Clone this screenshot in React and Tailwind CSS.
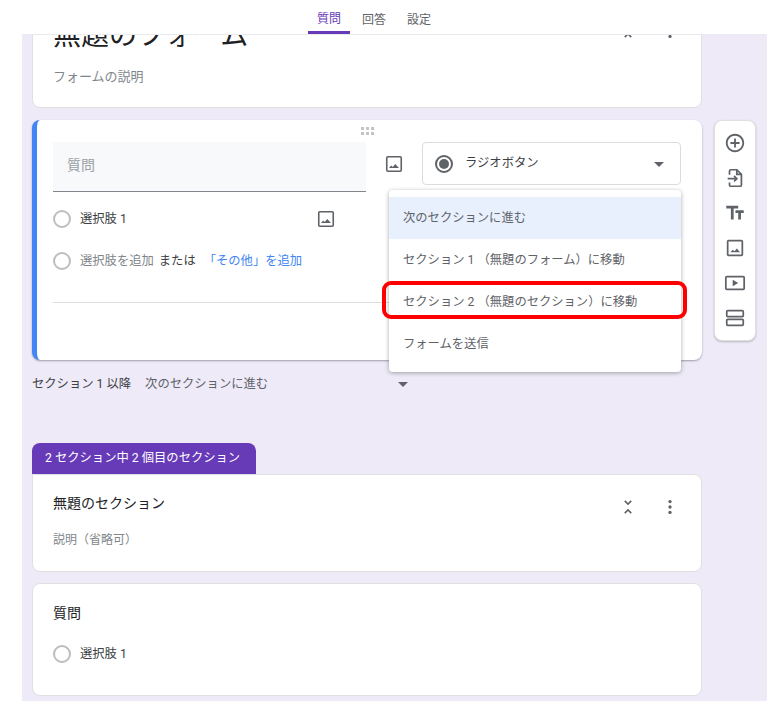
import React from "react";

const font = { fontFamily: 'Roboto, "Noto Sans CJK JP", sans-serif' };

function ImageIcon({ className }) {
  return (
    <svg viewBox="0 0 18 18" className={className} fill="none">
      <rect x="1.75" y="1.75" width="14.5" height="14.5" rx="1" stroke="#5f6368" strokeWidth="1.6" />
      <path d="M4 13l2.200-2.600 1.600 1.600 2.400-3 3.800 4z" fill="#5f6368" />
    </svg>
  );
}

function Caret({ className }) {
  return (
    <svg viewBox="0 0 10 5" className={className}>
      <path d="M0 0h10L5 5z" fill="#5f6368" />
    </svg>
  );
}

function Radio() {
  return <div className="w-[18px] h-[18px] rounded-full border-2 border-[#bdbdbd] shrink-0" />;
}

function UnfoldIcon() {
  return (
    <svg viewBox="0 0 24 24" className="w-5 h-5" fill="#5f6368">
      <path d="M7.410 18.590L8.830 20 12 16.830 15.170 20l1.410-1.410L12 14l-4.590 4.590zm9.180-13.180L15.170 4 12 7.170 8.830 4 7.410 5.410 12 10l4.590-4.590z" />
    </svg>
  );
}

function MoreIcon() {
  return (
    <svg viewBox="0 0 24 24" className="w-5 h-5" fill="#5f6368">
      <circle cx="12" cy="5.500" r="2" />
      <circle cx="12" cy="12" r="2" />
      <circle cx="12" cy="18.500" r="2" />
    </svg>
  );
}

function Toolbar() {
  return (
    <div className="w-[42px] h-[221px] ml-[12px] bg-white rounded-lg border border-[#e0e0e0] shadow-[0_1px_2px_rgba(60,64,67,0.3)] flex flex-col items-center pt-[11px] gap-[13px] shrink-0">
      <svg viewBox="0 0 24 24" className="w-[22px] h-[22px]" fill="#5f6368">
        <path d="M13 7h-2v4H7v2h4v4h2v-4h4v-2h-4V7zm-1-5C6.480 2 2 6.480 2 12s4.480 10 10 10 10-4.480 10-10S17.520 2 12 2zm0 18c-4.410 0-8-3.590-8-8s3.590-8 8-8 8 3.590 8 8-3.590 8-8 8z" />
      </svg>
      <svg viewBox="0 0 24 24" className="w-[22px] h-[22px]" fill="none" stroke="#5f6368" strokeWidth="1.900">
        <path d="M6 8.500V4.500A1.500 1.500 0 0 1 7.500 3H14l5 5v11.500a1.500 1.500 0 0 1-1.500 1.500H7.500A1.500 1.500 0 0 1 6 19.500V17" />
        <path d="M14 3v5h5" />
        <path d="M4 12.800h10M11 9.800l3 3-3 3" />
      </svg>
      <svg viewBox="0 0 24 24" className="w-[22px] h-[22px]" fill="#5f6368">
        <path d="M2.500 4v3h5v12h3V7h5V4h-13zm19 5h-9v3h3v7h3v-7h3V9z" />
      </svg>
      <svg viewBox="0 0 24 24" className="w-[22px] h-[22px]" fill="none">
        <rect x="4" y="4" width="16" height="16" rx="1" stroke="#5f6368" strokeWidth="1.900" />
        <path d="M7 16.500l2.500-2.700 2 1.800 2.500-3.100 3.500 4z" fill="#5f6368" />
      </svg>
      <svg viewBox="0 0 24 24" className="w-[22px] h-[22px]" fill="none">
        <rect x="2" y="5" width="20" height="14" rx="1" stroke="#5f6368" strokeWidth="1.900" />
        <path d="M9.500 8.500v7l6-3.500z" fill="#5f6368" />
      </svg>
      <svg viewBox="0 0 24 24" className="w-[22px] h-[22px]" fill="none" stroke="#5f6368" strokeWidth="1.900">
        <rect x="3" y="4" width="18" height="6.500" rx="1" />
        <rect x="3" y="13.500" width="18" height="6.500" rx="1" />
      </svg>
    </div>
  );
}

function Menu() {
  const items = [
    "次のセクションに進む",
    "セクション 1 （無題のフォーム）に移動",
    "セクション 2 （無題のセクション）に移動",
    "フォームを送信",
  ];
  return (
    <div className="absolute left-[-34px] top-[47px] w-[292px] h-[182px] bg-white rounded shadow-[0_1px_4px_rgba(60,64,67,0.45)] py-[7px] z-20">
      {items.map((item, i) => (
        <div
          key={item}
          className={`h-[42px] flex items-center pl-[14px] text-[12.3px] text-[#5f6368] ${i === 0 ? "bg-[#e8f0fe]" : ""}`}
        >
          {item}
        </div>
      ))}
      <div className="absolute left-[-7px] top-[91px] w-[305px] h-[38px] rounded-[9px] border-[4px] border-[#ff0000]" />
    </div>
  );
}

export default function App() {
  return (
    <div className="w-[784px] h-[712px] bg-white overflow-hidden" style={font}>
      <div className="relative z-10 ml-[22px] w-[745px] h-[35px] bg-white border-b border-[#e8eaed] pl-[286px]">
        <div className="flex h-full text-[12px] text-[#5f6368]">
          <div className="w-[42px] h-full flex items-center justify-center text-[#673ab7] border-b-[3px] border-[#673ab7] pt-[6px]">質問</div>
          <div className="ml-[12px] flex items-center pt-[6px]">回答</div>
          <div className="ml-[21px] flex items-center pt-[6px]">設定</div>
        </div>
      </div>

      <div className="ml-[22px] w-[745px] h-[666px] bg-[#eeeaf8] pl-[10px]">
        <div className="w-[670px] h-[97px] mt-[-24px] absolute">
          <div className="h-full bg-white rounded-lg border border-[#e0e0e0] px-[20px] pt-[7px]">
            <div className="flex justify-between h-[34px]">
              <div className="text-[28px] leading-[34px] text-[#202124]">無題のフォーム</div>
              <div className="flex gap-[22px] mr-[1px] mt-[2px]">
                <UnfoldIcon />
                <MoreIcon />
              </div>
            </div>
            <div className="mt-[14px] text-[13px] text-[#80868b]">フォームの説明</div>
          </div>
        </div>

        <div className="pt-[85px] flex items-start">
          <div className="relative w-[670px] h-[240px] bg-white rounded-lg border-l-[5px] border-[#4285f4] shadow-[0_1px_2px_rgba(60,64,67,0.45)] pl-[16px] pt-[22px]">
            <div className="absolute top-[7px] left-[324px] grid grid-cols-3 gap-[2px]">
              {[0, 1, 2, 3, 4, 5].map((d) => (
                <div key={d} className="w-[3px] h-[3px] bg-[#c4c4c4]" />
              ))}
            </div>
            <div className="flex items-start">
              <div className="w-[313px] h-[50px] bg-[#f8f9fa] border-b border-[#80868b] flex items-center pl-[14px] text-[14px] text-[#9aa0a6] pb-[2px]">
                質問
              </div>
              <ImageIcon className="w-[18px] h-[18px] ml-[19px] mt-[13px]" />
              <div className="relative ml-[19px] w-[259px] h-[43px] border border-[#dadce0] rounded flex items-center pl-[12px]">
                <div className="w-[18px] h-[18px] rounded-full border-2 border-[#5f6368] flex items-center justify-center">
                  <div className="w-[10px] h-[10px] rounded-full bg-[#5f6368]" />
                </div>
                <span className="ml-[12px] text-[12.3px] text-[#3c4043]">ラジオボタン</span>
                <Caret className="absolute right-[16px] top-[19px] w-[10px] h-[5px]" />
                <Menu />
              </div>
            </div>
            <div className="mt-[17px] h-[20px] flex items-center relative">
              <Radio />
              <span className="ml-[9px] text-[12.3px] text-[#3c4043]">選択肢 1</span>
              <ImageIcon className="absolute left-[264px] top-[1px] w-[18px] h-[18px]" />
            </div>
            <div className="mt-[22px] h-[20px] flex items-center text-[12.3px]">
              <Radio />
              <span className="ml-[9px] text-[#80868b]">選択肢を追加</span>
              <span className="ml-[5px] text-[#3c4043]">または</span>
              <span className="ml-[8px] text-[#4285f4]">「その他」を追加</span>
            </div>
            <div className="mt-[31px] mr-[21px] border-t border-[#dadce0]" />
          </div>
          <Toolbar />
        </div>

        <div className="mt-[15px] pt-[1px] flex items-center text-[12.3px] text-[#3c4043] h-[18px] w-[670px] relative">
          <span>セクション 1 以降</span>
          <span className="ml-[14px] text-[#5f6368]">次のセクションに進む</span>
          <Caret className="absolute left-[366px] top-[7px] w-[10px] h-[5px]" />
        </div>

        <div className="mt-[50px] w-[224px] h-[31px] bg-[#673ab7] rounded-t-lg flex items-center pl-[13px] text-[12.3px] text-white">
          2 セクション中 2 個目のセクション
        </div>
        <div className="w-[670px] h-[98px] bg-white rounded-b-lg rounded-tr-lg border border-[#e0e0e0] px-[20px] pt-[17px] relative">
          <div className="text-[14px] leading-[22px] text-[#202124]">無題のセクション</div>
          <div className="mt-[17px] text-[12px] text-[#80868b]">説明（省略可）</div>
          <div className="absolute top-[22px] right-[21px] flex gap-[22px]">
            <UnfoldIcon />
            <MoreIcon />
          </div>
        </div>
        <div className="mt-[11px] w-[670px] h-[113px] bg-white rounded-lg border border-[#e0e0e0] px-[20px] pt-[18px]">
          <div className="text-[14px] leading-[22px] text-[#202124]">質問</div>
          <div className="mt-[20px] h-[20px] flex items-center">
            <Radio />
            <span className="ml-[9px] text-[12.3px] text-[#3c4043]">選択肢 1</span>
          </div>
        </div>
      </div>
    </div>
  );
}
